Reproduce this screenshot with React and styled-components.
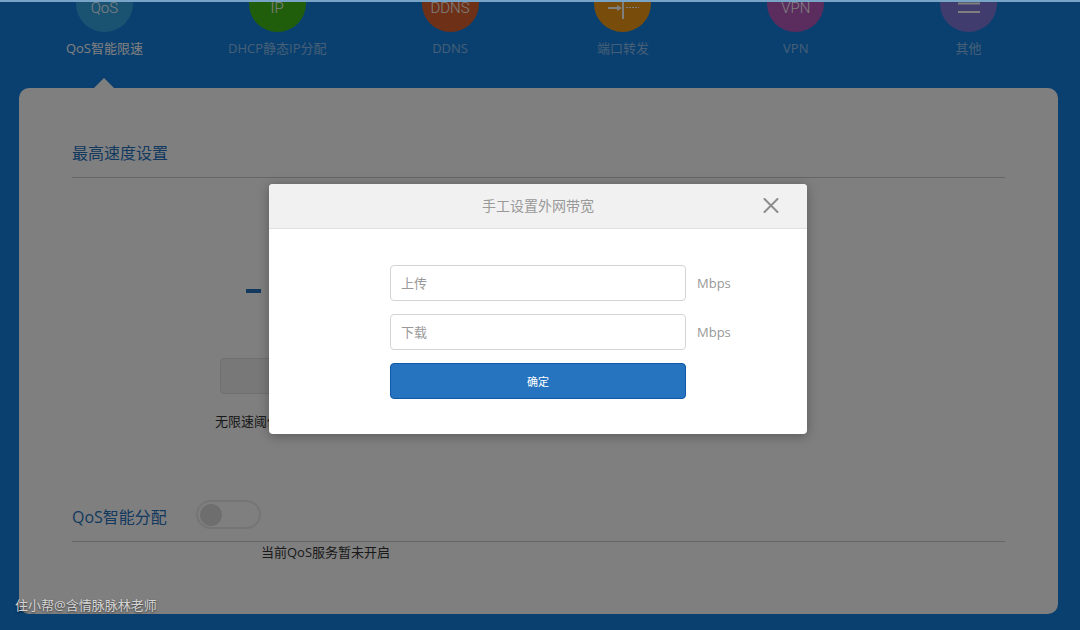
import React, { useState } from 'react'
import styled, { createGlobalStyle } from 'styled-components'

const tabs = [
    { name: 'QoS智能限速', mark: 'QoS', color: '#34a6e4' },
    { name: 'DHCP静态IP分配', mark: 'IP', color: '#43bc18' },
    { name: 'DDNS', mark: 'DDNS', color: '#dc602e' },
    { name: '端口转发', icon: 'forward', color: '#f09a18' },
    { name: 'VPN', mark: 'VPN', color: '#b45abc' },
    { name: '其他', icon: 'menu', color: '#8078dc' },
]

const ForwardIcon = () => (
    <svg width='32' height='32' viewBox='0 0 32 32' fill='none' stroke='currentColor'>
        <path d='M16 4v27' strokeWidth='2' />
        <path d='M1 20h10' strokeWidth='2' />
        <path d='M10 17l5 3l-5 3z' fill='currentColor' stroke='none' />
        <path d='M19 19.500h13' strokeWidth='1' strokeDasharray='2 1' />
    </svg>
)

const MenuIcon = () => (
    <svg width='22' height='22' viewBox='0 0 22 22' stroke='currentColor' strokeWidth='2'>
        <path d='M0 2h22M0 10.500h22M0 19h22' />
    </svg>
)

const CloseIcon = () => (
    <svg width='16' height='16' viewBox='0 0 16 16' stroke='currentColor' strokeWidth='2' strokeLinecap='round'>
        <path d='M1.500 1l13 13M14.500 1l-13 13' />
    </svg>
)

const App = () => {
    const [enabled, setEnabled] = useState(false)

    return (
        <Page>
            <GlobalStyle />
            <Nav>
                {tabs.map((tab, i) => (
                    <Tab href='#' key={tab.name} $active={i === 0}>
                        <Circle $color={tab.color}>
                            {tab.mark && <Mark>{tab.mark}</Mark>}
                            {tab.icon === 'forward' && <ForwardIcon />}
                            {tab.icon === 'menu' && <MenuIcon />}
                        </Circle>
                        {tab.name}
                        {i === 0 && <Arrow />}
                    </Tab>
                ))}
            </Nav>
            <Panel>
                <SectionHead>
                    <SectionTitle>最高速度设置</SectionTitle>
                </SectionHead>
                <Speed>
                    <Dash />
                    <SpeedButton type='button' aria-label='设置' />
                    <Note>无限速阈值</Note>
                </Speed>
                <SectionHead>
                    <SectionTitle>QoS智能分配</SectionTitle>
                    <Switch
                        type='checkbox'
                        aria-label='QoS智能分配'
                        checked={enabled}
                        onChange={() => setEnabled(!enabled)}
                    />
                </SectionHead>
                <Status>当前QoS服务暂未开启</Status>
            </Panel>
            <Mask>
                <Dialog role='dialog' aria-labelledby='dialog-title'>
                    <DialogHead>
                        <DialogTitle id='dialog-title'>手工设置外网带宽</DialogTitle>
                        <Close type='button' aria-label='关闭'>
                            <CloseIcon />
                        </Close>
                    </DialogHead>
                    <Form onSubmit={e => e.preventDefault()}>
                        <Input id='upload' placeholder='上传' />
                        <Unit htmlFor='upload'>Mbps</Unit>
                        <Input id='download' placeholder='下载' />
                        <Unit htmlFor='download'>Mbps</Unit>
                        <Submit type='submit'>确定</Submit>
                    </Form>
                </Dialog>
            </Mask>
            <TopEdge />
            <Watermark>住小帮@含情脉脉林老师</Watermark>
        </Page>
    )
}

const GlobalStyle = createGlobalStyle`
    * {
        box-sizing: border-box;
    }
    body {
        margin: 0;
        background: #1480de;
        font-family: 'Open Sans', 'Noto Sans CJK SC', sans-serif;
        font-size: 13px;
        line-height: 20px;
    }
    button, input {
        font-family: inherit;
    }
`
const Page = styled.div`
    position: relative;
    display: flex;
    flex-direction: column;
    min-height: 100vh;
    padding: 0 22px 16px 19px;
    overflow: hidden;
`
const Nav = styled.nav`
    display: grid;
    grid-template-columns: repeat(6, 1fr);
    margin: -25px 3px 0 -1px;
`
const Tab = styled.a`
    display: flex;
    flex-direction: column;
    align-items: center;
    height: 113px;
    color: ${({ $active }) => ($active ? '#fff' : 'rgba(255, 255, 255, 0.5)')};
    text-decoration: none;
`
const Circle = styled.span`
    display: flex;
    align-items: center;
    justify-content: center;
    width: 57px;
    height: 57px;
    margin-bottom: 6px;
    border-radius: 50%;
    background: ${({ $color }) => $color};
    color: #fff;
`
const Mark = styled.span`
    padding-top: 8px;
    font-family: Roboto, sans-serif;
    font-size: 15px;
    font-weight: 300;
    line-height: 16px;
`
const Arrow = styled.i`
    margin-top: auto;
    border: 10px solid transparent;
    border-top: 0;
    border-bottom-color: #fff;
`
const Panel = styled.main`
    flex: 1;
    padding: 40px 53px;
    border-radius: 10px;
    background: #fff;
`
const SectionHead = styled.div`
    display: flex;
    align-items: center;
    gap: 29px;
    height: 50px;
    border-bottom: 1px solid #ccc;
`
const SectionTitle = styled.h2`
    margin: 0;
    color: #2673bf;
    font-size: 16px;
    font-weight: 400;
    line-height: 24px;
`
const Speed = styled.div`
    display: flex;
    flex-direction: column;
    height: 314px;
    padding: 111px 0 0 143px;
`
const Dash = styled.span`
    width: 15px;
    height: 4px;
    margin-left: 31px;
    background: #2673bf;
`
const SpeedButton = styled.button`
    width: 120px;
    height: 36px;
    margin: 65px 0 17px 5px;
    border: 1px solid #e0e0e0;
    border-radius: 4px;
    background: #f1f1f1;
`
const Note = styled.span`
    color: #333;
`
const Switch = styled.input`
    appearance: none;
    display: flex;
    align-items: center;
    width: 65px;
    height: 29px;
    margin: 0 0 4px;
    padding: 0 2px;
    border: 2px solid #ebebeb;
    border-radius: 15px;
    &::before {
        content: '';
        width: 22px;
        height: 22px;
        border-radius: 50%;
        background: #dcdcdc;
    }
    &:checked {
        justify-content: flex-end;
        background: #2673bf;
    }
`
const Status = styled.p`
    margin: 0;
    padding-left: 189px;
    color: #333;
`
const Mask = styled.div`
    position: absolute;
    inset: 0;
    display: flex;
    align-items: flex-start;
    justify-content: center;
    padding: 184px 4px 0 0;
    background: rgba(0, 0, 0, 0.5);
`
const Dialog = styled.section`
    width: 538px;
    border-radius: 4px;
    background: #fff;
    box-shadow: 0 2px 12px rgba(0, 0, 0, 0.3);
    color: #999;
`
const DialogHead = styled.header`
    display: grid;
    grid-template-columns: 1fr auto 1fr;
    align-items: center;
    height: 45px;
    padding: 0 28px;
    border-bottom: 1px solid #e0e0e0;
    border-radius: 4px 4px 0 0;
    background: #f1f1f1;
`
const DialogTitle = styled.h3`
    grid-column: 2;
    margin: 0;
    font-size: 14px;
    font-weight: 400;
`
const Close = styled.button`
    display: flex;
    justify-self: end;
    padding: 0;
    border: 0;
    background: none;
    color: #8c8c8c;
    cursor: pointer;
`
const Form = styled.form`
    display: grid;
    grid-template-columns: 1fr 296px 1fr;
    align-items: center;
    gap: 13px 11px;
    padding: 36px 0 35px;
`
const Input = styled.input`
    grid-column: 2;
    height: 36px;
    padding: 0 10px;
    border: 1px solid #d4d4d4;
    border-radius: 4px;
    background: #fff;
    color: #333;
    font-size: 13px;
    &::placeholder {
        color: #999;
    }
`
const Unit = styled.label`
    grid-column: 3;
`
const Submit = styled.button`
    grid-column: 2;
    height: 36px;
    border: 1px solid #0f59a8;
    border-radius: 4px;
    background: #2673bf;
    color: #fff;
    font-size: 11px;
    cursor: pointer;
`
const TopEdge = styled.div`
    position: absolute;
    inset: 0 0 auto;
    height: 2px;
    background: #78a4c8;
`
const Watermark = styled.span`
    position: absolute;
    left: 15px;
    bottom: 15px;
    color: #d4d4d4;
    text-shadow: 0 1px 2px rgba(0, 0, 0, 0.6);
`

export default App
